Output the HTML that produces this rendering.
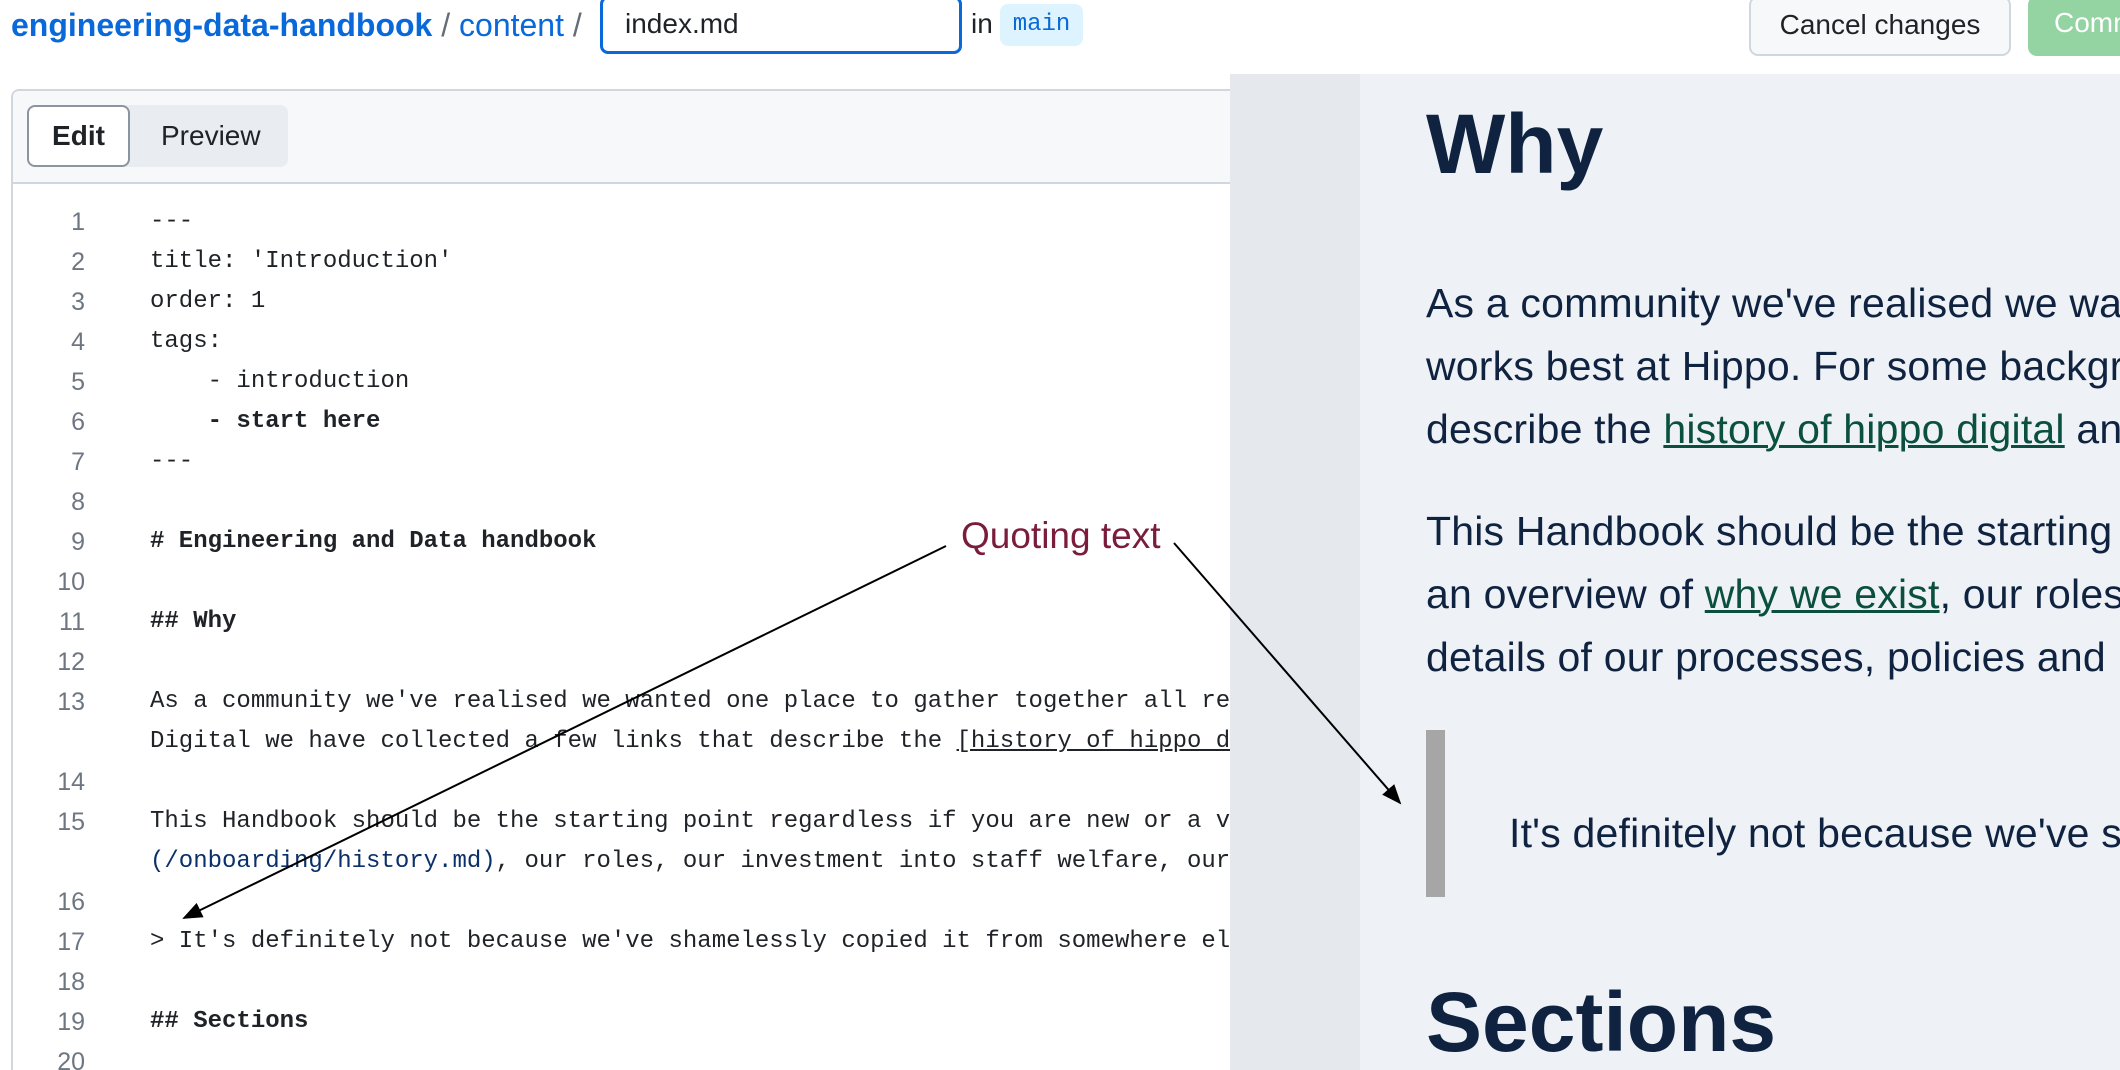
<!DOCTYPE html>
<html><head><meta charset="utf-8"><style>
*{box-sizing:border-box;margin:0;padding:0}
html,body{width:2120px;height:1070px;overflow:hidden}
body{background:#fff;position:relative;font-family:"Liberation Sans",sans-serif}
.abs{position:absolute}
.crumb{left:11px;top:4px;font-size:32px;color:#0969da;white-space:nowrap;line-height:42px}
.crumb b{font-weight:bold}
.crumb .s{color:#656d76}
.inp{left:600px;top:-4px;width:362px;height:58px;border:3px solid #0969da;border-radius:8px;font-size:28px;color:#1f2328;padding:9px 22px}
.in{left:971px;top:8px;font-size:28px;color:#1f2328}
.pill{left:1000px;top:4px;width:83px;height:42px;background:#ddf4ff;border-radius:8px;color:#0969da;font-family:"Liberation Mono",monospace;font-size:24px;text-align:center;line-height:42px}
.btn{left:1749px;top:-4px;width:262px;height:60px;border:2px solid #d0d7de;border-radius:9px;background:#f6f8fa;font-size:28px;color:#1f2328;text-align:center;line-height:54px}
.com{left:2028px;top:-4px;width:120px;height:60px;border-radius:9px;background:#94d3a2;color:#fff;font-size:28px;padding-left:26px;line-height:54px}
.ed{left:11px;top:89px;width:1300px;height:1000px;border:2px solid #d0d7de;border-radius:8px;background:#fff}
.hd{left:0;top:0;right:0;height:93px;background:#f6f8fa;border-bottom:2px solid #d0d7de;border-radius:8px 8px 0 0}
.tabs{left:14px;top:14px;width:261px;height:62px;background:#e9ecf0;border-radius:8px}
.edit{left:0;top:0;width:103px;height:62px;background:#fff;border:2px solid #8c959f;border-radius:8px;font-size:28px;font-weight:bold;color:#1f2328;text-align:center;line-height:58px}
.prev{left:134px;top:0;font-size:28px;color:#1f2328;line-height:62px}
.code{left:0;top:202px;font-family:"Liberation Mono",monospace;font-size:24px;color:#1f2328}
.row{height:40px;line-height:40px;position:relative}
.n{position:absolute;left:0;width:74px;text-align:right;color:#6e7781;font-family:"Liberation Sans",sans-serif;font-size:25px}
.t{position:absolute;left:139px;white-space:pre}
.lk{color:#0a3069}
.pv{left:1230px;top:74px;width:890px;height:996px;background:#eef2f6;overflow:hidden}
.strip{left:0;top:0;width:130px;height:100%;background:#e5e9ed}
.pc{color:#0f2340;white-space:nowrap}
.h{font-weight:bold;font-size:84px;left:196px}
.p{left:196px;font-size:41px;line-height:63px;letter-spacing:0.2px}
.p a{color:#0b4f40;text-decoration:underline;text-decoration-thickness:3px}
.bar{left:196px;top:656px;width:19px;height:167px;background:#a6a6a6}
.qt{left:961px;top:515px;font-size:37px;color:#7a1c3c;white-space:nowrap}
</style></head><body>
<div class="abs crumb"><b>engineering-data-handbook</b> <span class="s">/</span> content <span class="s">/</span></div>
<div class="abs inp">index.md</div>
<div class="abs in">in</div>
<div class="abs pill">main</div>
<div class="abs btn">Cancel changes</div>
<div class="abs com">Comm</div>
<div class="abs ed">
 <div class="abs hd"><div class="abs tabs"><div class="abs edit">Edit</div><div class="abs prev">Preview</div></div></div>
</div>
<div class="abs code" style="left:11px">
<div class="row"><span class="n">1</span><span class="t">---</span></div>
<div class="row"><span class="n">2</span><span class="t">title: 'Introduction'</span></div>
<div class="row"><span class="n">3</span><span class="t">order: 1</span></div>
<div class="row"><span class="n">4</span><span class="t">tags:</span></div>
<div class="row"><span class="n">5</span><span class="t">    - introduction</span></div>
<div class="row"><span class="n">6</span><span class="t"><b>    - start here</b></span></div>
<div class="row"><span class="n">7</span><span class="t">---</span></div>
<div class="row"><span class="n">8</span></div>
<div class="row"><span class="n">9</span><span class="t"><b># Engineering and Data handbook</b></span></div>
<div class="row"><span class="n">10</span></div>
<div class="row"><span class="n">11</span><span class="t"><b>## Why</b></span></div>
<div class="row"><span class="n">12</span></div>
<div class="row"><span class="n">13</span><span class="t">As a community we've realised we wanted one place to gather together all re</span></div>
<div class="row"><span class="t">Digital we have collected a few links that describe the <u>[history of hippo d</u></span></div>
<div class="row"><span class="n">14</span></div>
<div class="row"><span class="n">15</span><span class="t">This Handbook should be the starting point regardless if you are new or a v</span></div>
<div class="row"><span class="t"><span class="lk">(/onboarding/history.md)</span>, our roles, our investment into staff welfare, our</span></div>
<div class="row"><span class="n">16</span></div>
<div class="row"><span class="n">17</span><span class="t">&gt; It's definitely not because we've shamelessly copied it from somewhere el</span></div>
<div class="row"><span class="n">18</span></div>
<div class="row"><span class="n">19</span><span class="t"><b>## Sections</b></span></div>
<div class="row"><span class="n">20</span></div>
</div>
<div class="abs pv">
 <div class="abs strip"></div>
 <div class="abs pc h" style="top:22px">Why</div>
 <div class="abs pc p" style="top:198px">As a community we've realised we wanted one place to gather<br>works best at Hippo. For some background we have collected<br>describe the <a>history of hippo digital</a> and more</div>
 <div class="abs pc p" style="top:426px">This Handbook should be the starting point regardless<br>an overview of <a>why we exist</a>, our roles, our investment<br>details of our processes, policies and more</div>
 <div class="abs bar"></div>
 <div class="abs pc p" style="left:279px;top:728px">It's definitely not because we've shamelessly copied it</div>
 <div class="abs pc h" style="top:900px">Sections</div>
</div>
<div class="abs qt">Quoting text</div>
<svg class="abs" style="left:0;top:0" width="2120" height="1070">
<defs><marker id="a" markerWidth="10" markerHeight="8" refX="9" refY="4" orient="auto"><path d="M0,0 L10,4 L0,8z" fill="#000"/></marker></defs>
<line x1="946" y1="546" x2="184" y2="918" stroke="#000" stroke-width="2" marker-end="url(#a)"/>
<line x1="1174" y1="543" x2="1400" y2="803" stroke="#000" stroke-width="2" marker-end="url(#a)"/>
</svg>
</body></html>
